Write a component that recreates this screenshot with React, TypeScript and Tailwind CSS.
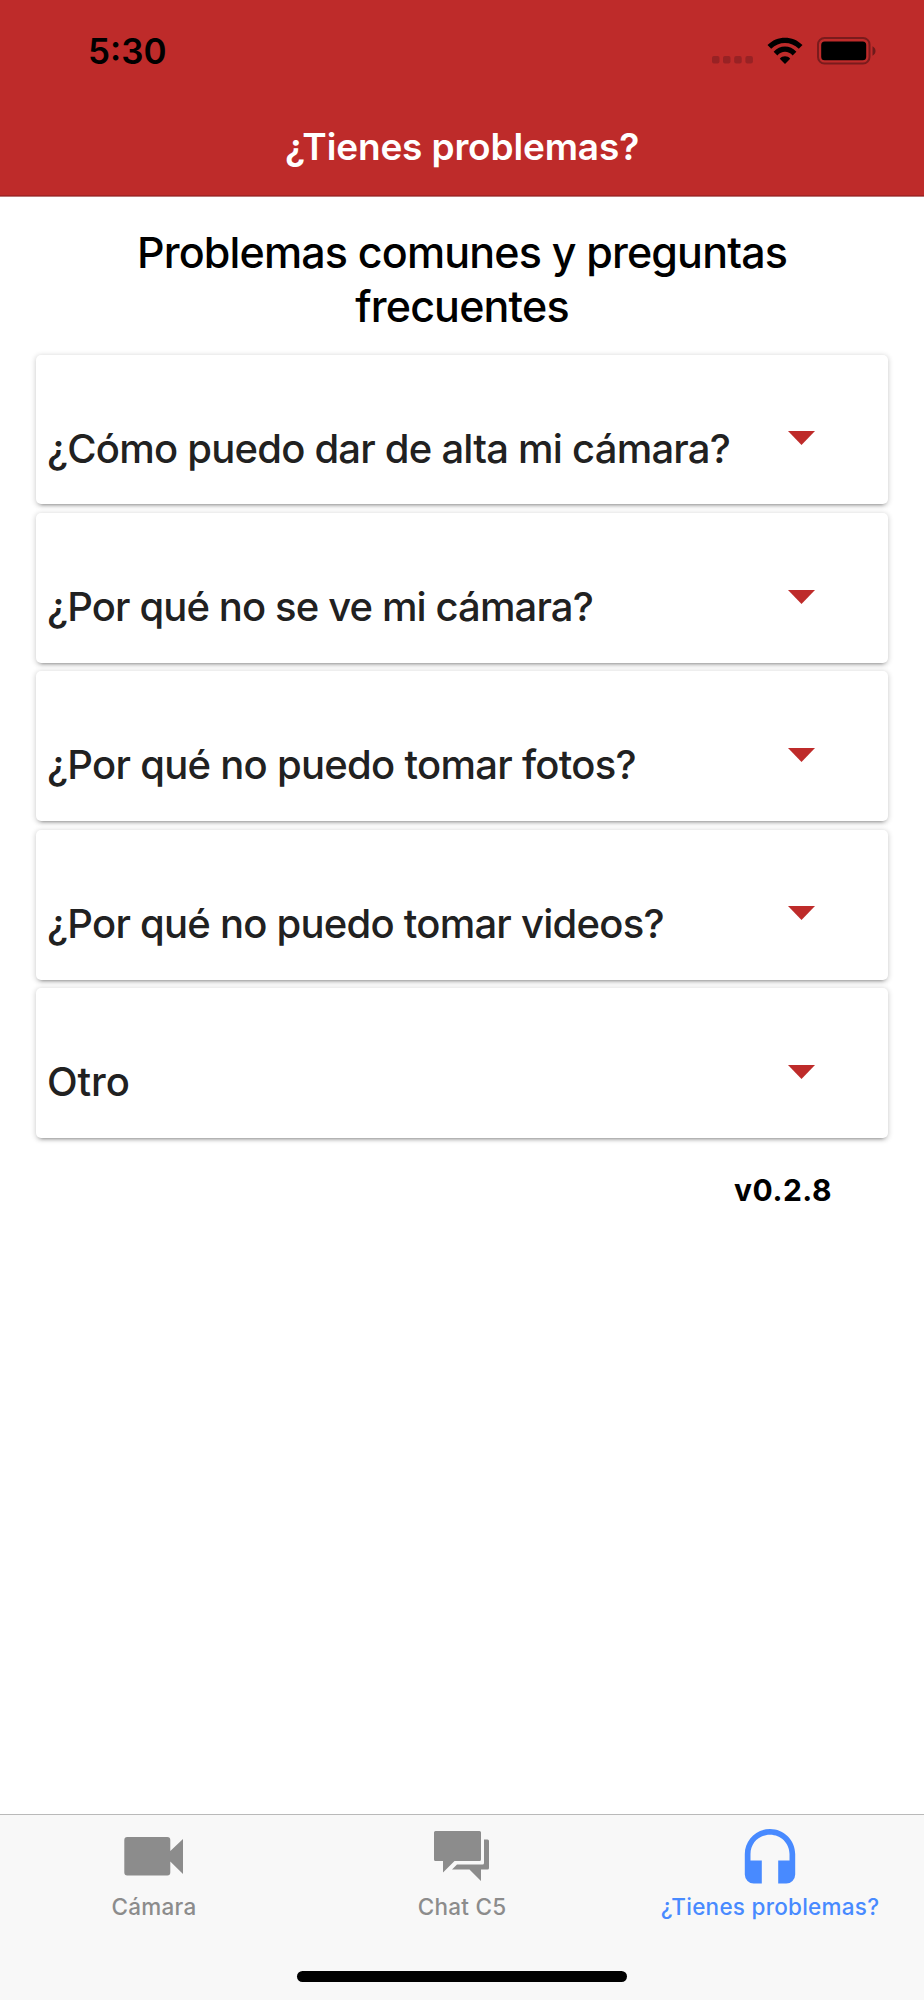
import { useState } from 'react';
import type { ReactNode } from 'react';

type Question = {
    id: number;
    title: string;
    tracking: string;
};

type Tab = {
    id: string;
    label: string;
    icon: ReactNode;
};

const questions: Question[] = [
    { id: 1, title: '¿Cómo puedo dar de alta mi cámara?', tracking: 'tracking-[-0.78px]' },
    { id: 2, title: '¿Por qué no se ve mi cámara?', tracking: 'tracking-[-0.88px]' },
    { id: 3, title: '¿Por qué no puedo tomar fotos?', tracking: 'tracking-[-0.72px]' },
    { id: 4, title: '¿Por qué no puedo tomar videos?', tracking: 'tracking-[-0.76px]' },
    { id: 5, title: 'Otro', tracking: 'tracking-[-0.1px]' },
];

const tabs: Tab[] = [
    { id: 'camera', label: 'Cámara', icon: <CameraIcon /> },
    { id: 'chat', label: 'Chat C5', icon: <ChatIcon /> },
    { id: 'help', label: '¿Tienes problemas?', icon: <HeadsetIcon /> },
];

function CameraIcon() {
    return (
        <svg width="60" height="56" viewBox="0 0 60 56" fill="currentColor">
            <path d="M3.3 9h40a3 3 0 0 1 3 3v11L59 11v35L46.3 33.5v11a3 3 0 0 1-3 3h-40a3 3 0 0 1-3-3V12a3 3 0 0 1 3-3z" />
        </svg>
    );
}

function ChatIcon() {
    return (
        <svg width="60" height="56" viewBox="0 0 60 56" fill="currentColor">
            <path d="M3.5 3h44a1.5 1.5 0 0 1 1.5 1.5v27a1.5 1.5 0 0 1-1.5 1.5h-25L11 44.5V33H3.5A1.5 1.5 0 0 1 2 31.5v-27A1.5 1.5 0 0 1 3.500 3z" />
            <path d="M52 11.5h3.5A1.5 1.5 0 0 1 57 13v27a1.5 1.5 0 0 1-1.5 1.5H49V53L37.5 41.5H20l5-5h25.500A1.5 1.5 0 0 0 52 35z" />
        </svg>
    );
}

function HeadsetIcon() {
    return (
        <svg width="60" height="56" viewBox="0 0 60 56" fill="currentColor">
            <path d="M30 1C16.2 1 4.800 12.200 4.800 26v20.500a9 9 0 0 0 9.200 9h7.800v-23H10.500V26C10.500 15.200 19.200 6.700 30 6.700S49.500 15.200 49.500 26v6.500H38.200v23H46a9 9 0 0 0 9.200-9V26C55.200 12.200 43.800 1 30 1z" />
        </svg>
    );
}

function StatusBar() {
    return (
        <div className="flex h-[101px] items-center justify-between pr-[47px] pl-22">
            <span className="pt-px text-[35px] font-semibold text-black">5:30</span>
            <div className="flex items-center">
                <svg width="41" height="28" viewBox="0 0 41 28" fill="#982224" className="mr-[14px]">
                    <rect x="0" y="19" width="7.5" height="7.5" rx="2" />
                    <rect x="11" y="19" width="7.5" height="7.5" rx="2" />
                    <rect x="22.2" y="19" width="7.5" height="7.5" rx="2" />
                    <rect x="33.4" y="19" width="7.5" height="7.5" rx="2" />
                </svg>
                <svg width="36" height="28" viewBox="0 -0.5 36 28" fill="#000" className="mr-[14px]">
                    <path d="M.5 7.6C10-2.2 26-2.2 35.5 7.6l-3.700 3.700C24 3.700 12 3.700 4.200 11.300z" />
                    <path d="M6.600 14.200C12.800 7.200 23.200 7.200 29.400 14.200L25.600 18C21.500 13 14.500 13 10.400 18z" />
                    <path d="M12.800 21.200C15.600 18 20.400 18 23.200 21.200L18 26.500z" />
                </svg>
                <svg width="60" height="28" viewBox="0 0 60 28">
                    <rect x="1" y="1" width="51.5" height="25.5" rx="6.5" fill="none" stroke="#7a1b1c" strokeWidth="2" />
                    <rect x="4.2" y="4.5" width="45" height="18.7" rx="3.5" fill="#000" />
                    <path d="M55.5 9.200c4 2 4 7.500 0 9.500z" fill="#6f1a1b" />
                </svg>
            </div>
        </div>
    );
}

function QuestionCard({ question }: { question: Question }) {
    return (
        <button
            type="button"
            className="flex h-[149.7px] w-full items-start rounded-[5px] bg-white pr-[73px] pl-[11px] text-left shadow-[0_4px_4px_-4px_rgba(0,0,0,0.5),0_1px_5px_1px_rgba(0,0,0,0.16)]"
        >
            <span className={`flex-1 pt-17 text-[40px] leading-[52px] font-medium whitespace-nowrap text-[#212121] ${question.tracking}`}>
                {question.title}
            </span>
            <svg width="27" height="14" viewBox="0 0 27 14" fill="#be2b2a" className="mt-[76.5px]">
                <path d="M0 0h27L13.5 14z" />
            </svg>
        </button>
    );
}

export default function App() {
    const [activeTab, setActiveTab] = useState('help');

    return (
        <div className="flex h-[2000px] w-[924px] flex-col overflow-hidden bg-white font-['Inter',sans-serif]">
            <header className="h-[197px] border-b border-[#b97575] bg-[#be2b2a]">
                <StatusBar />
                <h1 className="h-[95px] border-b border-[#a32323] pt-[21px] text-center text-[37px] leading-[50px] font-semibold tracking-[-0.15px] text-white">
                    ¿Tienes problemas?
                </h1>
            </header>

            <main className="flex-1 px-9 pt-[29px]">
                <h2 className="px-20 text-center text-[43px] leading-[53.5px] font-medium tracking-[-0.84px] text-black">
                    Problemas comunes y preguntas frecuentes
                </h2>
                <div className="mt-[21.7px] flex flex-col gap-[8.7px]">
                    {questions.map((question) => (
                        <QuestionCard key={question.id} question={question} />
                    ))}
                </div>
                <p className="mt-8 pr-14 text-right text-[30px] leading-10 font-bold tracking-[0.5px] text-black">v0.2.8</p>
            </main>

            <footer className="flex h-[186px] flex-col items-center border-t border-[#b9b9b9] bg-[#f8f8f8]">
                <nav className="grid w-full grid-cols-3">
                    {tabs.map((tab) => (
                        <button
                            key={tab.id}
                            type="button"
                            onClick={() => setActiveTab(tab.id)}
                            className={`flex flex-col items-center pt-[13px] ${activeTab === tab.id ? 'text-[#488aff]' : 'text-[#8c8c8c]'}`}
                        >
                            {tab.icon}
                            <span className="mt-2 text-[22.5px] leading-[30px] font-medium tracking-[0.25px] whitespace-nowrap">
                                {tab.label}
                            </span>
                        </button>
                    ))}
                </nav>
                <div className="mt-[49px] h-[11px] w-[330px] rounded-full bg-black" />
            </footer>
        </div>
    );
}
